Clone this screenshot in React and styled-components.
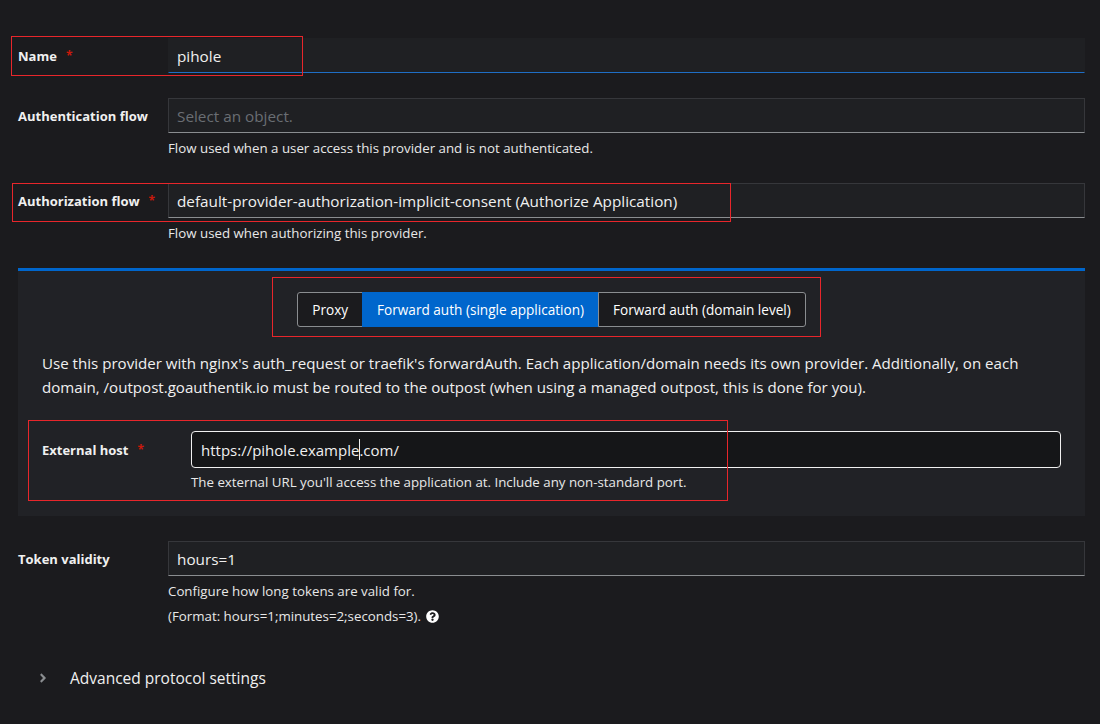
import React from 'react';
import styled, { createGlobalStyle } from 'styled-components';
import { FaQuestionCircle, FaAngleRight } from 'react-icons/fa';

const GlobalStyle = createGlobalStyle`
	html, body {
		margin: 0;
		padding: 0;
		background: #1b1b1e;
		font-family: 'Open Sans', 'Noto Sans', sans-serif;
		color: #f0f0f0;
	}
`;

const Page = styled.div`
	width: 1100px;
	height: 724px;
	box-sizing: border-box;
	padding: 38px 15px 0 18px;
	background: #1b1b1e;
	overflow: hidden;
`;

const FormGroup = styled.div`
	position: relative;
	display: grid;
	grid-template-columns: ${({ labelWidth }) => labelWidth || 150}px 1fr;
	margin-bottom: ${({ last }) => (last ? 0 : 25)}px;
`;

const Label = styled.label`
	display: flex;
	align-items: flex-start;
	padding-top: ${({ pad }) => pad || 9}px;
	font-size: 13px;
	font-weight: 700;
	color: #f0f0f0;
	line-height: 18px;
`;

const Required = styled.span`
	color: #c9190b;
	margin-left: 9px;
	font-size: 12px;
`;

const Control = styled.div`
	display: flex;
	flex-direction: column;
	min-width: 0;
`;

const TextInput = styled.input`
	box-sizing: border-box;
	width: 100%;
	height: 35px;
	padding: 0 8px;
	background: #1f2023;
	border: 1px solid ${({ focused }) => (focused ? '#1f2023' : '#36373b')};
	border-bottom: ${({ focused }) => (focused ? '1px solid #1f6ec5' : '1px solid #8a8d90')};
	color: #f0f0f0;
	font-family: inherit;
	font-size: 15.3px;
	outline: none;

	&::placeholder {
		color: #6a6e73;
	}
`;

const Helper = styled.div`
	margin-top: ${({ gap }) => (gap === undefined ? 5 : gap)}px;
	font-size: 13.3px;
	line-height: 20px;
	color: #e8e8e8;
	display: flex;
	align-items: center;
	gap: 5px;
`;

const Panel = styled.section`
	border-top: 3px solid #0066cc;
	background: #212226;
	padding: 21px 24px 24px;
	margin-bottom: 25px;
`;

const ToggleRow = styled.div`
	display: flex;
	justify-content: center;
	margin-bottom: 24px;
`;

const ToggleGroup = styled.div`
	position: relative;
	display: flex;
`;

const Toggle = styled.button`
	height: 35px;
	padding: 0 14px;
	font-family: inherit;
	font-size: 13.6px;
	color: #ffffff;
	background: ${({ active }) => (active ? '#0066cc' : '#1b1b1e')};
	border: 1px solid ${({ active }) => (active ? '#0066cc' : '#8a8d90')};
	margin-left: -1px;
	cursor: pointer;

	&:first-child {
		margin-left: 0;
		border-radius: 3px 0 0 3px;
	}
	&:last-of-type {
		border-radius: 0 3px 3px 0;
	}
`;

const Description = styled.p`
	margin: 0 0 32px;
	font-size: 15.1px;
	line-height: 24px;
	color: #f0f0f0;
`;

const HostInput = styled.div`
	box-sizing: border-box;
	height: 37px;
	display: flex;
	align-items: center;
	padding: 0 9px;
	background: #151618;
	border: 1.5px solid #f0f0f0;
	border-radius: 4px;
	font-size: 15px;
	color: #f0f0f0;
`;

const Caret = styled.span`
	display: inline-block;
	width: 1px;
	height: 21px;
	background: #f0f0f0;
	margin-right: -1px;
`;

const Annotation = styled.div`
	position: absolute;
	left: ${({ x }) => x}px;
	top: ${({ y }) => y}px;
	width: ${({ w }) => w}px;
	height: ${({ h }) => h}px;
	border: 1px solid #e8262b;
	box-sizing: border-box;
	pointer-events: none;
`;

const Expandable = styled.div`
	display: flex;
	align-items: center;
	gap: 20px;
	margin-top: 41px;
	padding-left: 18px;
	font-size: 15.5px;
	color: #f0f0f0;

	svg {
		color: #8a8d90;
	}
`;

const HelpIcon = styled(FaQuestionCircle)`
	color: #ffffff;
	font-size: 13px;
`;

export default function App() {
	return (
		<>
			<GlobalStyle />
			<Page>
				<FormGroup>
					<Label>
						Name <Required>*</Required>
					</Label>
					<Control>
						<TextInput focused defaultValue="pihole" />
					</Control>
					<Annotation x={-7} y={-2} w={292} h={40} />
				</FormGroup>

				<FormGroup>
					<Label>Authentication flow</Label>
					<Control>
						<TextInput placeholder="Select an object." />
						<Helper>Flow used when a user access this provider and is not authenticated.</Helper>
					</Control>
				</FormGroup>

				<FormGroup>
					<Label>
						Authorization flow <Required>*</Required>
					</Label>
					<Control>
						<TextInput defaultValue="default-provider-authorization-implicit-consent (Authorize Application)" />
						<Helper>Flow used when authorizing this provider.</Helper>
					</Control>
					<Annotation x={-6} y={0} w={719} h={39} />
				</FormGroup>

				<Panel>
					<ToggleRow>
						<ToggleGroup>
							<Toggle>Proxy</Toggle>
							<Toggle active>Forward auth (single application)</Toggle>
							<Toggle>Forward auth (domain level)</Toggle>
							<Annotation x={-25} y={-15} w={549} h={60} />
						</ToggleGroup>
					</ToggleRow>
					<Description>
						Use this provider with nginx's auth_request or traefik's forwardAuth. Each application/domain needs its own
						provider. Additionally, on each domain, /outpost.goauthentik.io must be routed to the outpost (when using a
						managed outpost, this is done for you).
					</Description>
					<FormGroup labelWidth={149} last>
						<Label pad={10}>
							External host <Required>*</Required>
						</Label>
						<Control>
							<HostInput>
								https://pihole.example<Caret />.com/
							</HostInput>
							<Helper gap={4}>The external URL you'll access the application at. Include any non-standard port.</Helper>
						</Control>
						<Annotation x={-14} y={-11} w={700} h={81} />
					</FormGroup>
				</Panel>

				<FormGroup>
					<Label>Token validity</Label>
					<Control>
						<TextInput defaultValue="hours=1" />
						<Helper>Configure how long tokens are valid for.</Helper>
						<Helper>
							(Format: hours=1;minutes=2;seconds=3). <HelpIcon />
						</Helper>
					</Control>
				</FormGroup>

				<Expandable>
					<FaAngleRight size={14} />
					Advanced protocol settings
				</Expandable>
			</Page>
		</>
	);
}
